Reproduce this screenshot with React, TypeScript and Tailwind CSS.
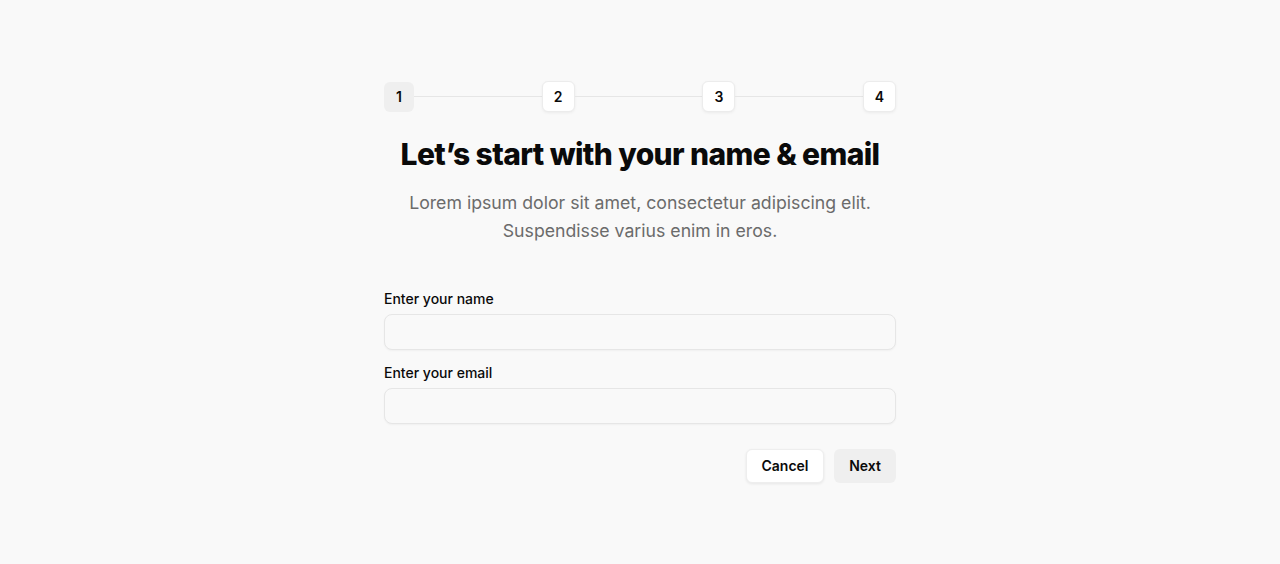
const steps = [1, 2, 3, 4]

export default function App() {
  return (
    <div
      className="min-h-[564px] w-full bg-[#f9f9f9] text-[#0a0a0a]"
      style={{ fontFamily: 'Inter, "Noto Sans", sans-serif' }}
    >
      <div className="mx-auto w-[512px] pt-[81px]">
        {/* Stepper */}
        <div className="flex items-center">
          {steps.map((s, i) => (
            <div key={s} className={i === 0 ? 'flex items-center' : 'flex flex-1 items-center'}>
              {i !== 0 && <div className="h-px flex-1 bg-[#e6e6e6]" />}
              <div
                className={
                  s === 1
                    ? 'flex h-[30px] w-[30px] items-center justify-center rounded-md bg-[#efefef] text-sm font-semibold'
                    : 'flex h-[31px] w-[33px] items-center justify-center rounded-md border border-[#ececec] bg-white text-sm font-semibold shadow-[0_1px_3px_rgba(0,0,0,0.06)]'
                }
              >
                {s}
              </div>
            </div>
          ))}
        </div>

        {/* Heading */}
        <h1 className="mt-6 text-center text-[30px] leading-9 font-extrabold tracking-[-0.02em] text-[#0a0a0a]">
          Let’s start with your name &amp; email
        </h1>
        <p className="mt-[17px] text-center text-[17.7px] leading-7 text-[#6b6b6b]">
          Lorem ipsum dolor sit amet, consectetur adipiscing elit.
          <br />
          Suspendisse varius enim in eros.
        </p>

        {/* Form */}
        <form className="mt-[44px]" onSubmit={e => e.preventDefault()}>
          <label className="block text-sm leading-5 font-medium">Enter your name</label>
          <input
            type="text"
            className="mt-[5px] block h-9 w-full rounded-lg border border-[#e6e6e6] bg-[#f9f9f9] px-3 text-sm shadow-[0_1px_2px_rgba(0,0,0,0.04)] outline-none"
          />
          <label className="mt-[13px] block text-sm leading-5 font-medium">Enter your email</label>
          <input
            type="email"
            className="mt-[5px] block h-9 w-full rounded-lg border border-[#e6e6e6] bg-[#f9f9f9] px-3 text-sm shadow-[0_1px_2px_rgba(0,0,0,0.04)] outline-none"
          />

          <div className="mt-[25px] flex justify-end gap-[10px]">
            <button
              type="button"
              className="h-[34px] w-[78px] rounded-md border border-[#eeeeee] bg-white text-sm font-semibold shadow-[0_1px_3px_rgba(0,0,0,0.08)]"
            >
              Cancel
            </button>
            <button
              type="submit"
              className="h-[34px] w-[62px] rounded-md bg-[#efefef] text-sm font-semibold"
            >
              Next
            </button>
          </div>
        </form>
      </div>
    </div>
  )
}
